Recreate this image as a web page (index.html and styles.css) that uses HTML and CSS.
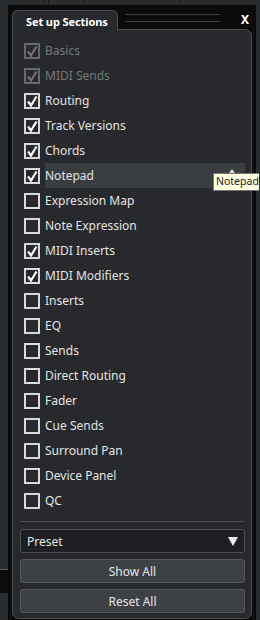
FILE: index.html
```html
<!DOCTYPE html>
<html lang="en">
<head>
  <meta charset="UTF-8">
  <title>Set up Sections</title>
  <link rel="stylesheet" href="styles.css">
</head>
<body>
  <!-- bits of the mixer behind the window -->
  <div class="backdrop">
    <div class="bg-line l1"></div>
    <div class="bg-line l2"></div>
    <div class="bg-line l3"></div>
    <div class="bg-line l4"></div>
    <div class="bg-band"></div>
  </div>

  <div class="window">
    <div class="titlebar">
      <div class="tab">Set up Sections</div>
      <div class="grip">
        <span></span>
        <span></span>
      </div>
      <div class="close">X</div>
    </div>

    <div class="panel">
      <ul class="sections" id="sections"></ul>

      <div class="separator"></div>

      <div class="controls">
        <div class="preset">
          <span>Preset</span>
          <span class="arrow"></span>
        </div>
        <button class="btn">Show All</button>
        <button class="btn">Reset All</button>
      </div>
    </div>
  </div>

  <div class="tooltip">Notepad</div>

  <script>
    const sections = [
      { name: "Basics", checked: true, locked: true },
      { name: "MIDI Sends", checked: true, locked: true },
      { name: "Routing", checked: true },
      { name: "Track Versions", checked: true },
      { name: "Chords", checked: true },
      { name: "Notepad", checked: true, hover: true },
      { name: "Expression Map" },
      { name: "Note Expression" },
      { name: "MIDI Inserts", checked: true },
      { name: "MIDI Modifiers", checked: true },
      { name: "Inserts" },
      { name: "EQ" },
      { name: "Sends" },
      { name: "Direct Routing" },
      { name: "Fader" },
      { name: "Cue Sends" },
      { name: "Surround Pan" },
      { name: "Device Panel" },
      { name: "QC" }
    ];

    const check = '<svg viewBox="0 0 16 16" width="16" height="16"><path d="M4 8.5 L7 12.5 L12.5 3.5" fill="none" stroke="currentColor" stroke-width="2.2"/></svg>';
    const grabber = '<svg class="resize" viewBox="0 0 6 8" width="6" height="8"><path d="M3 0 L6 4 L0 4 Z M2 4 H4 V8 H2 Z" fill="#d8d8d8"/></svg>';

    const list = document.getElementById("sections");
    sections.forEach(item => {
      const li = document.createElement("li");
      li.className = "row" + (item.locked ? " locked" : "") + (item.hover ? " hover" : "");
      li.innerHTML = `
        <span class="box">${item.checked ? check : ""}</span>
        <span class="label">${item.name}${item.hover ? grabber : ""}</span>
      `;
      list.appendChild(li);
    });
  </script>
</body>
</html>
```

FILE: styles.css
```css
body {
  margin: 0;
  padding: 5px 0 0 8px;
  width: 260px;
  height: 620px;
  box-sizing: border-box;
  overflow: hidden;
  background-color: #2a2d30;
  font-family: "Noto Sans", "Open Sans", sans-serif;
  color: #e4e4e4;
  position: relative;
}

.backdrop .bg-line {
  position: absolute;
  top: 0;
  width: 1px;
  height: 5px;
  background-color: #16181a;
}

.l1 { left: 43px; }
.l2 { left: 48px; }
.l3 { left: 83px; }
.l4 { left: 180px; }

.bg-band {
  position: absolute;
  left: 0;
  top: 569px;
  width: 8px;
  height: 23px;
  background-color: #0c0d0e;
  border-top: 1px solid #5a5d60;
}

.window {
  width: 248px;
  height: 615px;
  background-color: #0b0b0c;
  padding: 5px 4px 0 4px;
  box-sizing: border-box;
  position: relative;
}

.titlebar {
  display: flex;
  align-items: flex-start;
  height: 19px;
}

.tab {
  width: 106px;
  height: 20px;
  box-sizing: border-box;
  border: 1px solid #4c4f52;
  border-bottom: none;
  border-radius: 6px 6px 0 0;
  background-color: #27292c;
  color: #ffffff;
  font-weight: bold;
  font-size: 11px;
  letter-spacing: -0.1px;
  line-height: 21px;
  padding-left: 13px;
  position: relative;
  z-index: 1;
}

.grip {
  display: flex;
  flex-direction: column;
  gap: 6px;
  margin: 4px 0 0 7px;
  width: 95px;
}

.grip span {
  display: block;
  height: 1px;
  background-color: #3c3d3f;
}

.close {
  margin: 3px 0 0 21px;
  font-weight: bold;
  font-size: 12px;
  line-height: 14px;
  color: #ffffff;
}

.panel {
  height: 590px;
  box-sizing: border-box;
  border: 1px solid #4c4f52;
  border-radius: 0 7px 7px 7px;
  background-color: #27292c;
  padding: 8px 0 0 0;
}

.sections {
  list-style: none;
  margin: 0;
  padding: 0 6px 0 11px;
}

.row {
  display: flex;
  align-items: center;
  height: 25px;
  gap: 5px;
  font-size: 12px;
}

.box {
  width: 16px;
  height: 16px;
  box-sizing: border-box;
  border: 2px solid #d9d9d9;
  color: #ffffff;
  flex-shrink: 0;
  position: relative;
}

.box svg {
  position: absolute;
  left: -2px;
  top: -2px;
}

.label {
  flex: 1;
  height: 25px;
  line-height: 26px;
  position: relative;
}

.locked .box {
  border-color: #66696c;
  color: #707376;
}

.locked .label {
  color: #74777a;
}

.hover .label {
  background-color: #3a3d40;
}

.resize {
  position: absolute;
  right: 10px;
  top: 6px;
}

.separator {
  height: 1px;
  background-color: #4c4f52;
  margin: 8px 6px 0 7px;
}

.controls {
  display: flex;
  flex-direction: column;
  gap: 6px;
  padding: 7px 6px 0 7px;
}

.preset {
  height: 24px;
  box-sizing: border-box;
  border: 1px solid #4c4f52;
  border-radius: 3px;
  background-color: #1d1f22;
  display: flex;
  align-items: center;
  justify-content: space-between;
  padding: 0 6px 0 6px;
  font-size: 12px;
}

.arrow {
  width: 0;
  height: 0;
  border-left: 5px solid transparent;
  border-right: 5px solid transparent;
  border-top: 9px solid #f0f0f0;
}

.btn {
  height: 24px;
  box-sizing: border-box;
  border: 1px solid #56595c;
  border-radius: 3px;
  background-color: #3e4144;
  color: #e4e4e4;
  font-family: "Noto Sans", "Open Sans", sans-serif;
  font-size: 12px;
  padding: 0;
}

.tooltip {
  position: absolute;
  left: 213px;
  top: 173px;
  height: 16px;
  padding: 0 0 0 2px;
  background-color: #ffffe1;
  border: 1px solid #767676;
  border-right: none;
  color: #1a1a1a;
  font-size: 10.5px;
  line-height: 15px;
  white-space: nowrap;
}
```
